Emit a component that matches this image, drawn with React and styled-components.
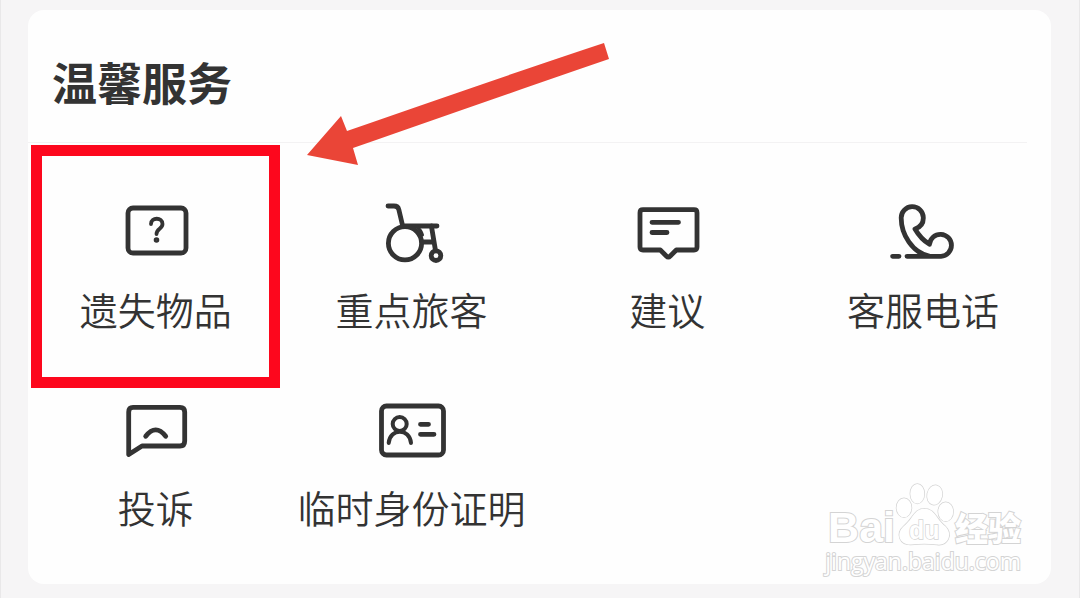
import React from "react";
import styled, { createGlobalStyle } from "styled-components";

const GlobalStyle = createGlobalStyle`
  * {
    box-sizing: border-box;
  }
  body {
    margin: 0;
    background: #f6f5f6;
    color: #333;
    font-family: "Noto Sans CJK SC", sans-serif;
  }
`

const Page = styled.main`
  min-height: 100vh;
  padding: 10px 28px 14px 27px;
  border-left: 1px solid #e9e8e9;
  border-right: 1px solid #e9e8e9;
`

const Card = styled.section`
  position: relative;
  padding-bottom: 45px;
  background: #fefefe;
  border-radius: 16px;
`

const Header = styled.header`
  display: flex;
  align-items: center;
  height: 133px;
  margin-right: 24px;
  padding: 12px 24px 0;
  border-bottom: 1px solid #f3f2f3;
`

const Title = styled.h2`
  margin: 0;
  font-size: 45px;
  line-height: 60px;
  font-weight: 700;
`

const Services = styled.div`
  display: grid;
  grid-template-columns: repeat(4, 1fr);
`

const Service = styled.button`
  position: relative;
  display: flex;
  flex-direction: column;
  align-items: center;
  gap: 18px;
  min-width: 0;
  padding: 52px 0 8px;
  border: 0;
  background: none;
  color: inherit;
  font-family: inherit;
  font-size: 38px;
  font-weight: 350;
  line-height: 48px;
  white-space: nowrap;
  cursor: pointer;
`

const Icon = styled.svg`
  width: 72px;
  height: 72px;
  fill: none;
  stroke: #333;
  stroke-width: 4.8;
  stroke-linecap: round;
  stroke-linejoin: round;
`

const Frame = styled.span`
  position: absolute;
  top: 2px;
  right: 4px;
  bottom: -47px;
  left: 3px;
  border: 11px solid #fd071d;
  pointer-events: none;
`

const Arrow = styled.svg`
  position: absolute;
  top: 30px;
  left: 272px;
  width: 320px;
  height: 130px;
  fill: #ea4537;
  pointer-events: none;
`

const Watermark = styled.div`
  position: absolute;
  right: 30px;
  bottom: 9px;
  display: flex;
  flex-direction: column;
  align-items: flex-end;
  color: #fff;
  paint-order: stroke fill;
  -webkit-text-stroke: 2px #d4d4d4;
`

const Brand = styled.div`
  display: flex;
  align-items: flex-end;
  height: 64px;
`

const Latin = styled.span`
  font: bold 43px/40px "Liberation Sans", sans-serif;
`

const Chinese = styled.span`
  font-size: 33px;
  line-height: 40px;
  font-weight: 900;
`

const Paw = styled.svg`
  width: 60px;
  height: 64px;
  fill: #fff;
  stroke: #d4d4d4;
  stroke-width: 1.4;
`

const PawText = styled.text`
  font: bold 25px "Liberation Sans", sans-serif;
`

const Site = styled.span`
  font: 23px/28px "Open Sans", sans-serif;
`

const services = [
  {
    name: "遗失物品",
    marked: true,
    icon: (
      <>
        <rect x="8" y="13" width="58" height="45" rx="5" />
        <path d="M31 29C31 22 42.5 22 42.5 29C42.5 34 36.5 33.5 36.5 39" strokeWidth="3.8" />
        <circle cx="36.5" cy="45" r="1.3" strokeWidth="3" />
      </>
    ),
  },
  {
    name: "重点旅客",
    icon: (
      <>
        <path d="M12 11H18Q22 11 22.8 14.5L26.7 31H61" />
        <circle cx="29" cy="48.3" r="16.6" />
        <path d="M41 32Q45 35 46.5 40" strokeWidth="3" />
        <path d="M55.4 31L59.4 55M46 47H57.5" />
        <circle cx="60" cy="60.7" r="4.8" />
      </>
    ),
  },
  {
    name: "建议",
    icon: (
      <>
        <path d="M12 14.7H63Q66 14.7 66 17.7V52Q66 55 63 55H45.3L39.3 61Q37.3 63 35.3 61L29.3 55H12Q9 55 9 52V17.7Q9 14.7 12 14.7Z" />
        <path d="M21 27.3H47.5M21 37.5H36" />
      </>
    ),
  },
  {
    name: "客服电话",
    icon: (
      <path d="M5.6 61.3H12M20 61.3H54A11 11 0 1 0 42.5 49.3C37 46 31.5 40 28 34C34 32 36.5 28 36.3 22.5A11 11 0 0 0 14.2 23C14.2 39 25 58 43 61.3" />
    ),
  },
  {
    name: "投诉",
    icon: (
      <>
        <path d="M13 14.3H60Q64.7 14.3 64.7 19V48Q64.7 53 60 53H22L8.7 61.5V19Q8.7 14.3 13 14.3Z" />
        <path d="M25.7 43.3Q35.7 30.5 45.7 43.3" />
      </>
    ),
  },
  {
    name: "临时身份证明",
    icon: (
      <>
        <rect x="5.5" y="13" width="62" height="49" rx="5" />
        <circle cx="23.7" cy="31" r="7" strokeWidth="4" />
        <path d="M12.7 50C14 35 33.7 35 35 50" strokeWidth="4" />
        <path d="M44.5 31.3H52.5M44.5 41.3H58" />
      </>
    ),
  },
]

export default function App() {
  return (
    <>
      <GlobalStyle />
      <Page>
        <Card>
          <Header>
            <Title>温馨服务</Title>
          </Header>
          <Services>
            {services.map((s) => (
              <Service key={s.name} type="button">
                <Icon viewBox="0 0 72 72" aria-hidden="true">{s.icon}</Icon>
                <span>{s.name}</span>
                {s.marked && <Frame />}
              </Service>
            ))}
          </Services>
          <Arrow viewBox="0 0 320 130" aria-hidden="true">
            <path d="M7 115L41 76L47 91Q225 29 304 3L309 19Q230 46 53 108L58 125Z" />
          </Arrow>
          <Watermark>
            <Brand>
              <Latin>Bai</Latin>
              <Paw viewBox="0 0 60 64">
                <ellipse cx="9" cy="24.7" rx="7.5" ry="9.5" />
                <ellipse cx="22.3" cy="10.7" rx="7" ry="9.8" />
                <ellipse cx="39.7" cy="12" rx="7.5" ry="9.8" transform="rotate(12 39.7 12)" />
                <ellipse cx="50.7" cy="28.7" rx="7.5" ry="9.5" />
                <path d="M29.3 25.7C40 25.7 41 36 50 43C59 52 52 63 42 61.5Q29.3 60 16 61.5C5 62 0 51 9 43C18 36 19 25.7 29.3 25.7Z" />
                <PawText x="14" y="56">du</PawText>
              </Paw>
              <Chinese>经验</Chinese>
            </Brand>
            <Site>jingyan.baidu.com</Site>
          </Watermark>
        </Card>
      </Page>
    </>
  )
}
